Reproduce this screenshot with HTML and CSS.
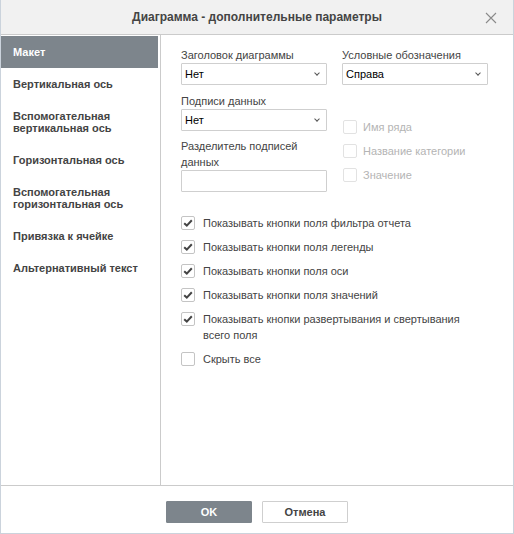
FILE: index.html
```html
<!DOCTYPE html>
<html lang="ru">

<head>
    <meta charset="UTF-8">
    <title>Диаграмма - дополнительные параметры</title>
    <link rel="stylesheet" href="styles.css">
</head>

<body>
    <div class="dialog">
        <div class="header">
            <span class="title">Диаграмма - дополнительные параметры</span>
            <span class="close"><svg width="12" height="12" viewBox="0 0 12 12"><path d="M1 1L11 11M11 1L1 11" stroke="#8a8a8a" stroke-width="1.1" fill="none"/></svg></span>
        </div>

        <div class="body">
            <ul class="menu">
                <li class="active">Макет</li>
                <li>Вертикальная ось</li>
                <li>Вспомогательная вертикальная ось</li>
                <li>Горизонтальная ось</li>
                <li>Вспомогательная горизонтальная ось</li>
                <li>Привязка к ячейке</li>
                <li>Альтернативный текст</li>
            </ul>

            <div class="panel">
                <div class="cols">
                    <div class="col">
                        <div class="label">Заголовок диаграммы</div>
                        <div class="select">Нет<i class="caret"></i></div>
                        <div class="label gap">Подписи данных</div>
                        <div class="select">Нет<i class="caret"></i></div>
                        <div class="label gap2">Разделитель подписей данных</div>
                        <div class="input"></div>
                    </div>
                    <div class="col">
                        <div class="label">Условные обозначения</div>
                        <div class="select">Справа<i class="caret"></i></div>
                        <div class="series">
                            <div class="check off"><span class="box"></span>Имя ряда</div>
                            <div class="check off"><span class="box"></span>Название категории</div>
                            <div class="check off"><span class="box"></span>Значение</div>
                        </div>
                    </div>
                </div>

                <div class="options">
                    <div class="row"><span class="box on"><svg width="12" height="12" viewBox="0 0 12 12"><path d="M2.2 6.2L4.8 8.6L9.8 3.2" stroke="#444" stroke-width="2" fill="none"/></svg></span><span>Показывать кнопки поля фильтра отчета</span></div>
                    <div class="row"><span class="box on"><svg width="12" height="12" viewBox="0 0 12 12"><path d="M2.2 6.2L4.8 8.6L9.8 3.2" stroke="#444" stroke-width="2" fill="none"/></svg></span><span>Показывать кнопки поля легенды</span></div>
                    <div class="row"><span class="box on"><svg width="12" height="12" viewBox="0 0 12 12"><path d="M2.2 6.2L4.8 8.6L9.8 3.2" stroke="#444" stroke-width="2" fill="none"/></svg></span><span>Показывать кнопки поля оси</span></div>
                    <div class="row"><span class="box on"><svg width="12" height="12" viewBox="0 0 12 12"><path d="M2.2 6.2L4.8 8.6L9.8 3.2" stroke="#444" stroke-width="2" fill="none"/></svg></span><span>Показывать кнопки поля значений</span></div>
                    <div class="row"><span class="box on"><svg width="12" height="12" viewBox="0 0 12 12"><path d="M2.2 6.2L4.8 8.6L9.8 3.2" stroke="#444" stroke-width="2" fill="none"/></svg></span><span class="wrap">Показывать кнопки развертывания и свертывания всего поля</span></div>
                    <div class="row"><span class="box"></span><span>Скрыть все</span></div>
                </div>
            </div>
        </div>

        <div class="footer">
            <button class="btn primary">OK</button>
            <button class="btn">Отмена</button>
        </div>
    </div>
</body>

</html>
```

FILE: styles.css
```css
body,
html {
    margin: 0;
    height: 100%;
}

body {
    font-family: "Liberation Sans", Arial, sans-serif;
    font-size: 11px;
    color: #444;
    background-color: #fff;
}

ul {
    margin: 0;
    padding: 0;
    list-style-type: none;
}

.dialog {
    display: flex;
    flex-direction: column;
    width: 514px;
    height: 534px;
    box-sizing: border-box;
    border: 1px solid #cbd3dc;
    border-top: none;
}

.header {
    position: relative;
    height: 34px;
    line-height: 34px;
    text-align: center;
    background-color: #f1f1f1;
    border-bottom: 1px solid #cbcbcb;
}

.title {
    font-size: 12px;
    font-weight: bold;
    color: #444;
}

.close {
    position: absolute;
    right: 16px;
    top: 12px;
    width: 12px;
    height: 12px;
    line-height: 0;
}

.body {
    display: flex;
    flex: 1;
}

.menu {
    width: 157px;
    padding-top: 1px;
    padding-right: 2px;
    border-right: 1px solid #cbcbcb;
}

.menu li {
    padding: 10px 12px 10px 12px;
    line-height: 12px;
    font-weight: bold;
}

.menu li.active {
    color: #fff;
    background-color: #7d858c;
}

.panel {
    flex: 1;
    padding: 12px 0 0 20px;
}

.cols {
    display: flex;
    gap: 15px;
}

.col {
    width: 146px;
}

.label {
    line-height: 16px;
}

.label.gap {
    margin-top: 8px;
}

.label.gap2 {
    margin-top: 7px;
}

.select,
.input {
    position: relative;
    height: 20px;
    line-height: 20px;
    padding-left: 3px;
    border: 1px solid #cfcfcf;
    border-radius: 1px;
    color: #000;
}

.caret {
    position: absolute;
    right: 7px;
    top: 7px;
    width: 3px;
    height: 3px;
    border-right: 1px solid #555;
    border-bottom: 1px solid #555;
    transform: rotate(45deg);
}

.series {
    margin-top: 35px;
}

.check {
    display: flex;
    align-items: center;
    height: 14px;
    margin-bottom: 10px;
    margin-left: 1px;
}

.check.off {
    color: #b4b4b4;
}

.check.off .box {
    border-color: #e2e2e2;
    margin-right: 6px;
}

.box {
    display: inline-flex;
    align-items: center;
    justify-content: center;
    flex: none;
    width: 12px;
    height: 12px;
    border: 1px solid #c4c4c4;
    border-radius: 2px;
    background-color: #fff;
}

.options {
    margin-top: 23px;
}

.row {
    display: flex;
    align-items: flex-start;
    line-height: 16px;
    margin-bottom: 8px;
}

.row .box {
    margin-top: 1px;
    margin-right: 8px;
}

.row .wrap {
    width: 280px;
}

.footer {
    display: flex;
    justify-content: center;
    gap: 10px;
    height: 48px;
    box-sizing: border-box;
    padding-top: 15px;
    border-top: 1px solid #cbcbcb;
}

.btn {
    width: 86px;
    height: 22px;
    font-family: inherit;
    font-size: 11px;
    font-weight: bold;
    color: #444;
    background-color: #fff;
    border: 1px solid #cfcfcf;
    border-radius: 1px;
}

.btn.primary {
    color: #fff;
    background-color: #7d858c;
    border-color: #7d858c;
}
```
